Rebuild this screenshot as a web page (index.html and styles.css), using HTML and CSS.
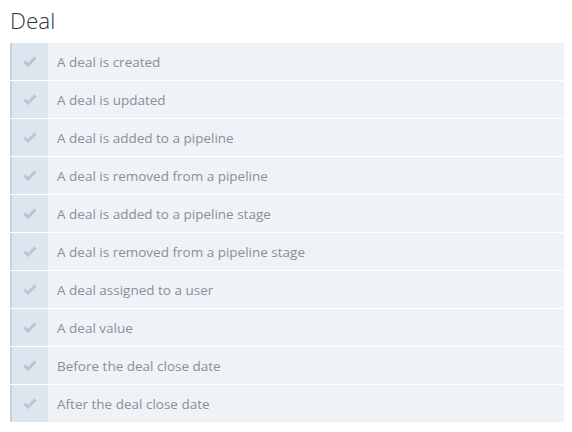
FILE: index.html
```html
<!DOCTYPE html>
<html>
<head>
<meta charset="utf-8">
<link rel="stylesheet" href="styles.css">
</head>
<body>
<h1 class="title">Deal</h1>
<ul class="list">
  <li class="row"><span class="icon"><svg viewBox="0 0 14 11" width="14" height="11"><path d="M1.5 5.5 L5 9 L12.5 1.5" fill="none" stroke="currentColor" stroke-width="3"/></svg></span><span class="label">A deal is created</span></li>
  <li class="row"><span class="icon"><svg viewBox="0 0 14 11" width="14" height="11"><path d="M1.5 5.5 L5 9 L12.5 1.5" fill="none" stroke="currentColor" stroke-width="3"/></svg></span><span class="label">A deal is updated</span></li>
  <li class="row"><span class="icon"><svg viewBox="0 0 14 11" width="14" height="11"><path d="M1.5 5.5 L5 9 L12.5 1.5" fill="none" stroke="currentColor" stroke-width="3"/></svg></span><span class="label">A deal is added to a pipeline</span></li>
  <li class="row"><span class="icon"><svg viewBox="0 0 14 11" width="14" height="11"><path d="M1.5 5.5 L5 9 L12.5 1.5" fill="none" stroke="currentColor" stroke-width="3"/></svg></span><span class="label">A deal is removed from a pipeline</span></li>
  <li class="row"><span class="icon"><svg viewBox="0 0 14 11" width="14" height="11"><path d="M1.5 5.5 L5 9 L12.5 1.5" fill="none" stroke="currentColor" stroke-width="3"/></svg></span><span class="label">A deal is added to a pipeline stage</span></li>
  <li class="row"><span class="icon"><svg viewBox="0 0 14 11" width="14" height="11"><path d="M1.5 5.5 L5 9 L12.5 1.5" fill="none" stroke="currentColor" stroke-width="3"/></svg></span><span class="label">A deal is removed from a pipeline stage</span></li>
  <li class="row"><span class="icon"><svg viewBox="0 0 14 11" width="14" height="11"><path d="M1.5 5.5 L5 9 L12.5 1.5" fill="none" stroke="currentColor" stroke-width="3"/></svg></span><span class="label">A deal assigned to a user</span></li>
  <li class="row"><span class="icon"><svg viewBox="0 0 14 11" width="14" height="11"><path d="M1.5 5.5 L5 9 L12.5 1.5" fill="none" stroke="currentColor" stroke-width="3"/></svg></span><span class="label">A deal value</span></li>
  <li class="row"><span class="icon"><svg viewBox="0 0 14 11" width="14" height="11"><path d="M1.5 5.5 L5 9 L12.5 1.5" fill="none" stroke="currentColor" stroke-width="3"/></svg></span><span class="label">Before the deal close date</span></li>
  <li class="row"><span class="icon"><svg viewBox="0 0 14 11" width="14" height="11"><path d="M1.5 5.5 L5 9 L12.5 1.5" fill="none" stroke="currentColor" stroke-width="3"/></svg></span><span class="label">After the deal close date</span></li>
</ul>
</body>
</html>
```

FILE: styles.css
```css
html, body {
  margin: 0;
  padding: 0;
  background: #ffffff;
}
body {
  padding: 0 8px 0 10px;
  font-family: "Open Sans", "Liberation Sans", sans-serif;
}
.title {
  margin: 0;
  padding-top: 6px;
  height: 43px;
  box-sizing: border-box;
  font-size: 22.5px;
  font-weight: 300;
  line-height: 30px;
  color: #333333;
}
.list {
  list-style: none;
  margin: 0;
  padding: 0;
  display: flex;
  flex-direction: column;
  gap: 1px;
}
.row {
  display: flex;
  align-items: stretch;
  height: 37px;
  background: #eef3f8;
  border-left: 2px solid #c3d2de;
}
.icon {
  width: 36px;
  flex: none;
  display: flex;
  align-items: center;
  justify-content: center;
  background: #dde6ee;
  color: #b5c6d4;
}
.label {
  display: flex;
  align-items: center;
  padding-left: 9px;
  font-size: 13.5px;
  color: #8a8f99;
}
```
